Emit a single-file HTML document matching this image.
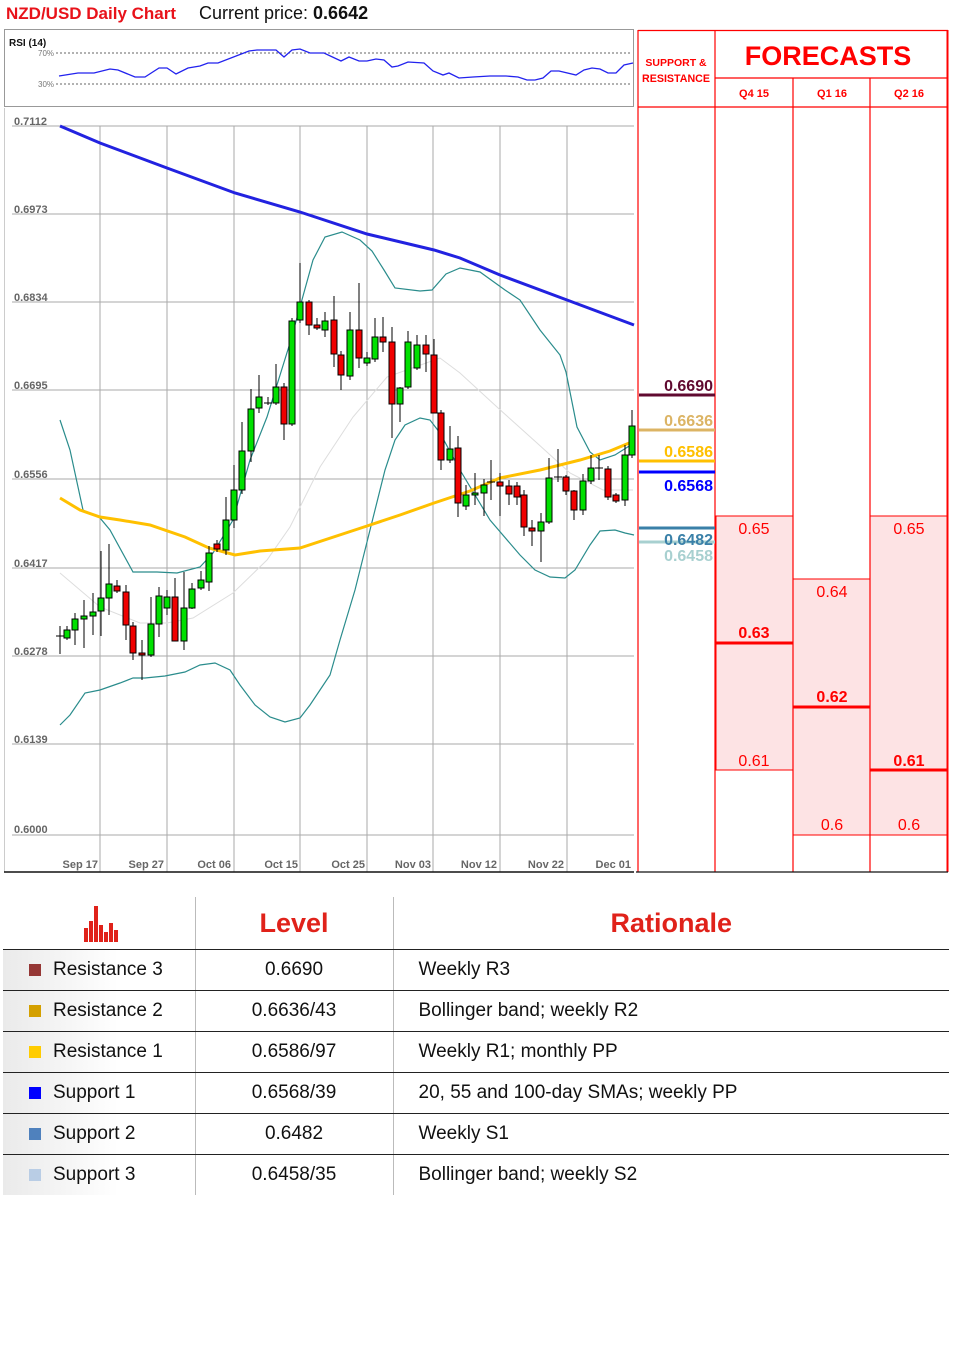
<!DOCTYPE html>
<html><head><meta charset="utf-8"><style>
body{margin:0;background:#fff;width:959px;height:1368px;overflow:hidden;position:relative;font-family:"Liberation Sans",sans-serif}
.t{position:absolute;white-space:nowrap}
table{position:absolute;left:3px;top:897px;width:946px;border-collapse:collapse;font-size:19px;color:#111;table-layout:fixed}
td{height:40px;border-bottom:1.5px solid #222;padding:0;white-space:nowrap}
td.a{border-right:1px solid #bbb;background:linear-gradient(90deg,#eaeaea,#fff 60%)}
td.b{text-align:center;border-right:1px solid #bbb}
td.c{padding-left:25px}
.sq{display:inline-block;width:12px;height:12px;margin:0 12px 0 26px;vertical-align:-1px}
th{height:50px;border-bottom:1.5px solid #222;color:#e0221a;font-size:27px;font-weight:bold;font-family:"Liberation Sans Narrow","Liberation Sans",sans-serif}
</style></head><body>
<div class="t" style="left:6px;top:4px;font-size:17px;font-weight:bold;color:#e8121a">NZD/USD Daily Chart</div>
<div class="t" style="left:199px;top:3px;font-size:18px;color:#111">Current price: <b>0.6642</b></div>
<svg width="959" height="880" style="position:absolute;left:0;top:0" font-family="Liberation Sans,sans-serif">
<rect x="4.5" y="29.5" width="629" height="77" fill="#fff" stroke="#999"/>
<text x="9" y="46" font-size="10" font-weight="bold" fill="#111">RSI (14)</text>
<text x="38" y="56" font-size="8" fill="#777">70%</text><text x="38" y="87" font-size="8" fill="#777">30%</text>
<line x1="56" y1="53" x2="632" y2="53" stroke="#666" stroke-dasharray="2,2"/>
<line x1="56" y1="84" x2="632" y2="84" stroke="#666" stroke-dasharray="2,2"/>
<polyline fill="none" stroke="#2222ee" stroke-width="1.3" points="59,76 78,73 94,73 110,69 118,70 135,77 145,77 159,68 167,68 176,74 188,68 200,66 208,63 218,63 249,51 257,50 276,50 284,57 292,50 300,49 310,53 324,53 341,61 349,57 359,61 367,61 376,59 384,60 392,67 398,66 408,62 424,63 433,71 443,75 449,73 459,78 473,77 490,76 506,76 518,77 527,80 535,80 543,78 551,71 559,71 576,75 584,70 592,68 600,69 608,73 616,73 624,65 633,63"/>
<g stroke="#aaa" stroke-width="1">
<line x1="12" y1="126" x2="634" y2="126"/><line x1="12" y1="214" x2="634" y2="214"/><line x1="12" y1="302" x2="634" y2="302"/><line x1="12" y1="390" x2="634" y2="390"/><line x1="12" y1="479" x2="634" y2="479"/><line x1="12" y1="568" x2="634" y2="568"/><line x1="12" y1="656" x2="634" y2="656"/><line x1="12" y1="744" x2="634" y2="744"/><line x1="12" y1="835" x2="634" y2="835"/>
<line x1="100" y1="126" x2="100" y2="872"/><line x1="167" y1="126" x2="167" y2="872"/><line x1="234" y1="126" x2="234" y2="872"/><line x1="300" y1="126" x2="300" y2="872"/><line x1="367" y1="126" x2="367" y2="872"/><line x1="433" y1="126" x2="433" y2="872"/><line x1="500" y1="126" x2="500" y2="872"/><line x1="567" y1="126" x2="567" y2="872"/>
</g>
<line x1="4.5" y1="108" x2="4.5" y2="872" stroke="#ccc"/>
<line x1="4" y1="872" x2="634" y2="872" stroke="#111" stroke-width="1.5"/>
<g font-size="11" font-weight="bold" fill="#666">
<text x="14" y="125">0.7112</text><text x="14" y="213">0.6973</text><text x="14" y="301">0.6834</text><text x="14" y="389">0.6695</text><text x="14" y="478">0.6556</text><text x="14" y="567">0.6417</text><text x="14" y="655">0.6278</text><text x="14" y="743">0.6139</text><text x="14" y="833">0.6000</text>
</g>
<g font-size="11" font-weight="bold" fill="#666" text-anchor="end">
<text x="98" y="868">Sep 17</text><text x="164" y="868">Sep 27</text><text x="231" y="868">Oct 06</text><text x="298" y="868">Oct 15</text><text x="365" y="868">Oct 25</text><text x="431" y="868">Nov 03</text><text x="497" y="868">Nov 12</text><text x="564" y="868">Nov 22</text><text x="631" y="868">Dec 01</text>
</g>
<polyline fill="none" stroke="#ddd" stroke-width="1" points="60,573 100,607 140,623 167,623 193,618 233,593 267,560 290,527 320,467 353,417 387,377 440,358 460,373 497,407 537,443 570,473 603,490 633,490"/>
<polyline fill="none" stroke="#2a8c8c" stroke-width="1.2" points="60,420 70,450 83,510 100,518 110,530 133,572 157,572 177,573 200,567 213,553 233,520 250,460 267,417 290,343 313,260 325,237 342,232 360,240 372,251 384,270 395,288 420,291 432,290 446,274 460,268 480,272 505,290 520,300 540,330 560,355 566,372 577,427 590,452 600,460 615,455 634,443"/>
<polyline fill="none" stroke="#2a8c8c" stroke-width="1.2" points="60,725 70,715 85,693 100,690 120,683 133,678 145,678 165,676 185,672 200,665 215,663 230,670 240,685 255,705 270,717 285,722 300,718 310,705 320,690 330,675 340,640 355,590 370,530 385,470 395,440 405,425 420,418 430,420 440,433 460,470 490,520 520,555 535,570 550,577 565,578 575,570 590,545 600,531 615,530 625,533 634,535"/>
<polyline fill="none" stroke="#2222e0" stroke-width="3" points="60,126 100,143 167,168 235,193 300,212 367,234 434,250 460,258 500,275 567,300 634,325"/>
<polyline fill="none" stroke="#ffc000" stroke-width="3" points="60,498 80,510 100,517 120,520 150,525 185,537 209,548 235,555 260,551 300,548 367,526 400,515 434,503 470,491 500,478 540,470 580,460 610,451 634,441"/>
<g stroke="#000" stroke-width="1">
<line x1="60" y1="626" x2="60" y2="654"/><line x1="56" y1="636" x2="64" y2="636"/>
<line x1="67" y1="626" x2="67" y2="640"/><rect x="64" y="630" width="6" height="8" fill="#00e000"/>
<line x1="75" y1="613" x2="75" y2="645"/><rect x="72" y="619" width="6" height="11" fill="#00e000"/>
<line x1="84" y1="600" x2="84" y2="648"/><rect x="81" y="616" width="6" height="3" fill="#00e000"/>
<line x1="93" y1="593" x2="93" y2="635"/><rect x="90" y="612" width="6" height="4" fill="#00e000"/>
<line x1="101" y1="551" x2="101" y2="636"/><rect x="98" y="598" width="6" height="13" fill="#00e000"/>
<line x1="109" y1="544" x2="109" y2="615"/><rect x="106" y="584" width="6" height="14" fill="#00e000"/>
<line x1="117" y1="580" x2="117" y2="593"/><rect x="114" y="586" width="6" height="5" fill="#f00000"/>
<line x1="126" y1="585" x2="126" y2="640"/><rect x="123" y="592" width="6" height="33" fill="#f00000"/>
<line x1="133" y1="622" x2="133" y2="660"/><rect x="130" y="626" width="6" height="27" fill="#f00000"/>
<line x1="142" y1="640" x2="142" y2="680"/><rect x="139" y="653" width="6" height="2" fill="#f00000"/>
<line x1="151" y1="597" x2="151" y2="657"/><rect x="148" y="624" width="6" height="31" fill="#00e000"/>
<line x1="159" y1="587" x2="159" y2="637"/><rect x="156" y="596" width="6" height="28" fill="#00e000"/>
<line x1="167" y1="590" x2="167" y2="615"/><rect x="164" y="597" width="6" height="11" fill="#00e000"/>
<line x1="175" y1="578" x2="175" y2="641"/><rect x="172" y="597" width="6" height="44" fill="#f00000"/>
<line x1="184" y1="572" x2="184" y2="650"/><rect x="181" y="608" width="6" height="33" fill="#00e000"/>
<line x1="192" y1="583" x2="192" y2="609"/><rect x="189" y="589" width="6" height="19" fill="#00e000"/>
<line x1="201" y1="571" x2="201" y2="590"/><rect x="198" y="580" width="6" height="8" fill="#00e000"/>
<line x1="209" y1="546" x2="209" y2="591"/><rect x="206" y="553" width="6" height="29" fill="#00e000"/>
<line x1="217" y1="540" x2="217" y2="552"/><rect x="214" y="544" width="6" height="5" fill="#f00000"/>
<line x1="226" y1="497" x2="226" y2="555"/><rect x="223" y="520" width="6" height="30" fill="#00e000"/>
<line x1="234" y1="465" x2="234" y2="528"/><rect x="231" y="490" width="6" height="30" fill="#00e000"/>
<line x1="242" y1="422" x2="242" y2="494"/><rect x="239" y="451" width="6" height="39" fill="#00e000"/>
<line x1="251" y1="389" x2="251" y2="462"/><rect x="248" y="409" width="6" height="42" fill="#00e000"/>
<line x1="259" y1="375" x2="259" y2="413"/><rect x="256" y="397" width="6" height="11" fill="#00e000"/>
<line x1="268" y1="397" x2="268" y2="405"/><line x1="264" y1="403" x2="272" y2="403"/>
<line x1="276" y1="364" x2="276" y2="405"/><rect x="273" y="387" width="6" height="16" fill="#00e000"/>
<line x1="284" y1="383" x2="284" y2="440"/><rect x="281" y="387" width="6" height="37" fill="#f00000"/>
<line x1="292" y1="318" x2="292" y2="426"/><rect x="289" y="321" width="6" height="103" fill="#00e000"/>
<line x1="300" y1="263" x2="300" y2="323"/><rect x="297" y="302" width="6" height="18" fill="#00e000"/>
<line x1="309" y1="300" x2="309" y2="335"/><rect x="306" y="302" width="6" height="23" fill="#f00000"/>
<line x1="317" y1="318" x2="317" y2="330"/><rect x="314" y="325" width="6" height="3" fill="#f00000"/>
<line x1="325" y1="312" x2="325" y2="337"/><rect x="322" y="321" width="6" height="9" fill="#00e000"/>
<line x1="334" y1="296" x2="334" y2="367"/><rect x="331" y="320" width="6" height="34" fill="#f00000"/>
<line x1="341" y1="351" x2="341" y2="390"/><rect x="338" y="355" width="6" height="20" fill="#f00000"/>
<line x1="350" y1="312" x2="350" y2="380"/><rect x="347" y="330" width="6" height="46" fill="#00e000"/>
<line x1="359" y1="283" x2="359" y2="368"/><rect x="356" y="330" width="6" height="28" fill="#f00000"/>
<line x1="367" y1="352" x2="367" y2="366"/><rect x="364" y="358" width="6" height="5" fill="#00e000"/>
<line x1="375" y1="318" x2="375" y2="362"/><rect x="372" y="337" width="6" height="22" fill="#00e000"/>
<line x1="383" y1="317" x2="383" y2="352"/><rect x="380" y="337" width="6" height="5" fill="#f00000"/>
<line x1="392" y1="327" x2="392" y2="438"/><rect x="389" y="342" width="6" height="62" fill="#f00000"/>
<line x1="400" y1="387" x2="400" y2="422"/><rect x="397" y="388" width="6" height="16" fill="#00e000"/>
<line x1="408" y1="331" x2="408" y2="389"/><rect x="405" y="342" width="6" height="45" fill="#00e000"/>
<line x1="417" y1="335" x2="417" y2="370"/><rect x="414" y="345" width="6" height="23" fill="#00e000"/>
<line x1="426" y1="335" x2="426" y2="372"/><rect x="423" y="345" width="6" height="9" fill="#f00000"/>
<line x1="434" y1="339" x2="434" y2="413"/><rect x="431" y="355" width="6" height="58" fill="#f00000"/>
<line x1="441" y1="410" x2="441" y2="470"/><rect x="438" y="413" width="6" height="47" fill="#f00000"/>
<line x1="450" y1="426" x2="450" y2="463"/><rect x="447" y="449" width="6" height="11" fill="#00e000"/>
<line x1="458" y1="436" x2="458" y2="517"/><rect x="455" y="448" width="6" height="55" fill="#f00000"/>
<line x1="466" y1="485" x2="466" y2="510"/><rect x="463" y="495" width="6" height="11" fill="#00e000"/>
<line x1="475" y1="473" x2="475" y2="505"/><rect x="472" y="493" width="6" height="2" fill="#00e000"/>
<line x1="484" y1="479" x2="484" y2="516"/><rect x="481" y="485" width="6" height="8" fill="#00e000"/>
<line x1="491" y1="460" x2="491" y2="500"/><line x1="487" y1="482" x2="495" y2="482"/>
<line x1="500" y1="473" x2="500" y2="516"/><rect x="497" y="482" width="6" height="4" fill="#f00000"/>
<line x1="509" y1="480" x2="509" y2="505"/><rect x="506" y="486" width="6" height="8" fill="#f00000"/>
<line x1="517" y1="482" x2="517" y2="505"/><rect x="514" y="486" width="6" height="11" fill="#f00000"/>
<line x1="524" y1="490" x2="524" y2="536"/><rect x="521" y="495" width="6" height="32" fill="#f00000"/>
<line x1="532" y1="520" x2="532" y2="546"/><rect x="529" y="528" width="6" height="3" fill="#f00000"/>
<line x1="541" y1="513" x2="541" y2="562"/><rect x="538" y="522" width="6" height="9" fill="#00e000"/>
<line x1="549" y1="458" x2="549" y2="524"/><rect x="546" y="478" width="6" height="44" fill="#00e000"/>
<line x1="558" y1="449" x2="558" y2="482"/><line x1="554" y1="477" x2="562" y2="477"/>
<line x1="566" y1="475" x2="566" y2="495"/><rect x="563" y="477" width="6" height="14" fill="#f00000"/>
<line x1="574" y1="490" x2="574" y2="520"/><rect x="571" y="491" width="6" height="19" fill="#f00000"/>
<line x1="583" y1="474" x2="583" y2="515"/><rect x="580" y="481" width="6" height="29" fill="#00e000"/>
<line x1="591" y1="455" x2="591" y2="484"/><rect x="588" y="468" width="6" height="13" fill="#00e000"/>
<line x1="599" y1="455" x2="599" y2="480"/><line x1="595" y1="468" x2="603" y2="468"/>
<line x1="608" y1="466" x2="608" y2="500"/><rect x="605" y="469" width="6" height="28" fill="#f00000"/>
<line x1="616" y1="493" x2="616" y2="503"/><rect x="613" y="495" width="6" height="6" fill="#f00000"/>
<line x1="625" y1="445" x2="625" y2="506"/><rect x="622" y="455" width="6" height="45" fill="#00e000"/>
<line x1="632" y1="410" x2="632" y2="458"/><rect x="629" y="426" width="6" height="29" fill="#00e000"/>
</g>
<rect x="716" y="516" width="77" height="254" fill="#fde3e4" stroke="#f00"/>
<rect x="793" y="579" width="77" height="256" fill="#fde3e4" stroke="#f00"/>
<rect x="870" y="516" width="77" height="319" fill="#fde3e4" stroke="#f00"/>
<g stroke="#f00" stroke-width="1.2">
<line x1="638" y1="30" x2="638" y2="872"/><line x1="715" y1="30" x2="715" y2="872"/><line x1="793" y1="78" x2="793" y2="872"/><line x1="870" y1="78" x2="870" y2="872"/>
<line x1="638" y1="30.5" x2="948" y2="30.5"/><line x1="715" y1="78" x2="948" y2="78"/><line x1="638" y1="107" x2="948" y2="107"/>
</g>
<line x1="947.5" y1="30" x2="947.5" y2="872" stroke="#f00" stroke-width="2"/>
<line x1="636" y1="872" x2="948" y2="872" stroke="#111" stroke-width="1.2"/>
<g stroke="#f00" stroke-width="3"><line x1="716" y1="643" x2="793" y2="643"/><line x1="793" y1="707" x2="870" y2="707"/><line x1="870" y1="770" x2="947" y2="770"/></g>
<text x="676" y="66" font-size="10.5" font-weight="bold" fill="#f00" text-anchor="middle">SUPPORT &amp;</text>
<text x="676" y="82" font-size="11" font-weight="bold" fill="#f00" text-anchor="middle" textLength="68" lengthAdjust="spacingAndGlyphs">RESISTANCE</text>
<text x="828" y="65" font-size="27" font-weight="bold" fill="#f00" text-anchor="middle">FORECASTS</text>
<g font-size="11" font-weight="bold" fill="#f00" text-anchor="middle"><text x="754" y="97">Q4 15</text><text x="832" y="97">Q1 16</text><text x="909" y="97">Q2 16</text></g>
<g font-size="16" fill="#f00" text-anchor="middle">
<text x="754" y="534">0.65</text><text x="754" y="638" font-weight="bold">0.63</text><text x="754" y="766">0.61</text>
<text x="832" y="597">0.64</text><text x="832" y="702" font-weight="bold">0.62</text><text x="832" y="830">0.6</text>
<text x="909" y="534">0.65</text><text x="909" y="766" font-weight="bold">0.61</text><text x="909" y="830">0.6</text>
</g>
<g stroke-width="3"><line x1="639" y1="395" x2="715" y2="395" stroke="#600a30"/><line x1="639" y1="430" x2="715" y2="430" stroke="#dcb464"/><line x1="639" y1="461" x2="715" y2="461" stroke="#ffc000"/><line x1="639" y1="472" x2="715" y2="472" stroke="#0000ff"/><line x1="639" y1="528" x2="715" y2="528" stroke="#3a80a8"/><line x1="639" y1="542" x2="715" y2="542" stroke="#a8d0d0"/></g>
<g font-size="16" font-weight="bold" text-anchor="end">
<text x="713" y="391" fill="#600a30">0.6690</text><text x="713" y="426" fill="#dcb464">0.6636</text><text x="713" y="457" fill="#ffc000">0.6586</text><text x="713" y="491" fill="#0000ff">0.6568</text><text x="713" y="545" fill="#3a80a8">0.6482</text><text x="713" y="561" fill="#a8d0d0">0.6458</text>
</g>
</svg>
<svg width="40" height="40" style="position:absolute;left:82px;top:904px"><g fill="#e0221a"><rect x="2" y="24" width="4" height="14"/><rect x="7" y="17" width="4" height="21"/><rect x="12" y="2" width="4" height="36"/><rect x="17" y="21" width="4" height="17"/><rect x="22" y="28" width="4" height="10"/><rect x="27" y="19" width="4" height="19"/><rect x="32" y="26" width="4" height="12"/></g></svg>
<table>
<colgroup><col style="width:192px"><col style="width:198px"><col></colgroup>
<tr><th style="border-right:1px solid #bbb"></th><th style="border-right:1px solid #bbb">Level</th><th>Rationale</th></tr>
<tr><td class="a"><span class="sq" style="background:#953735"></span>Resistance 3</td><td class="b">0.6690</td><td class="c">Weekly R3</td></tr>
<tr><td class="a"><span class="sq" style="background:#d4a000"></span>Resistance 2</td><td class="b">0.6636/43</td><td class="c">Bollinger band; weekly R2</td></tr>
<tr><td class="a"><span class="sq" style="background:#ffcc00"></span>Resistance 1</td><td class="b">0.6586/97</td><td class="c">Weekly R1; monthly PP</td></tr>
<tr><td class="a"><span class="sq" style="background:#0000ff"></span>Support 1</td><td class="b">0.6568/39</td><td class="c">20, 55 and 100-day SMAs; weekly PP</td></tr>
<tr><td class="a"><span class="sq" style="background:#4f81bd"></span>Support 2</td><td class="b">0.6482</td><td class="c">Weekly S1</td></tr>
<tr><td class="a" style="border-bottom:none"><span class="sq" style="background:#b9cde5"></span>Support 3</td><td class="b" style="border-bottom:none">0.6458/35</td><td class="c" style="border-bottom:none">Bollinger band; weekly S2</td></tr>
</table>
</body></html>
